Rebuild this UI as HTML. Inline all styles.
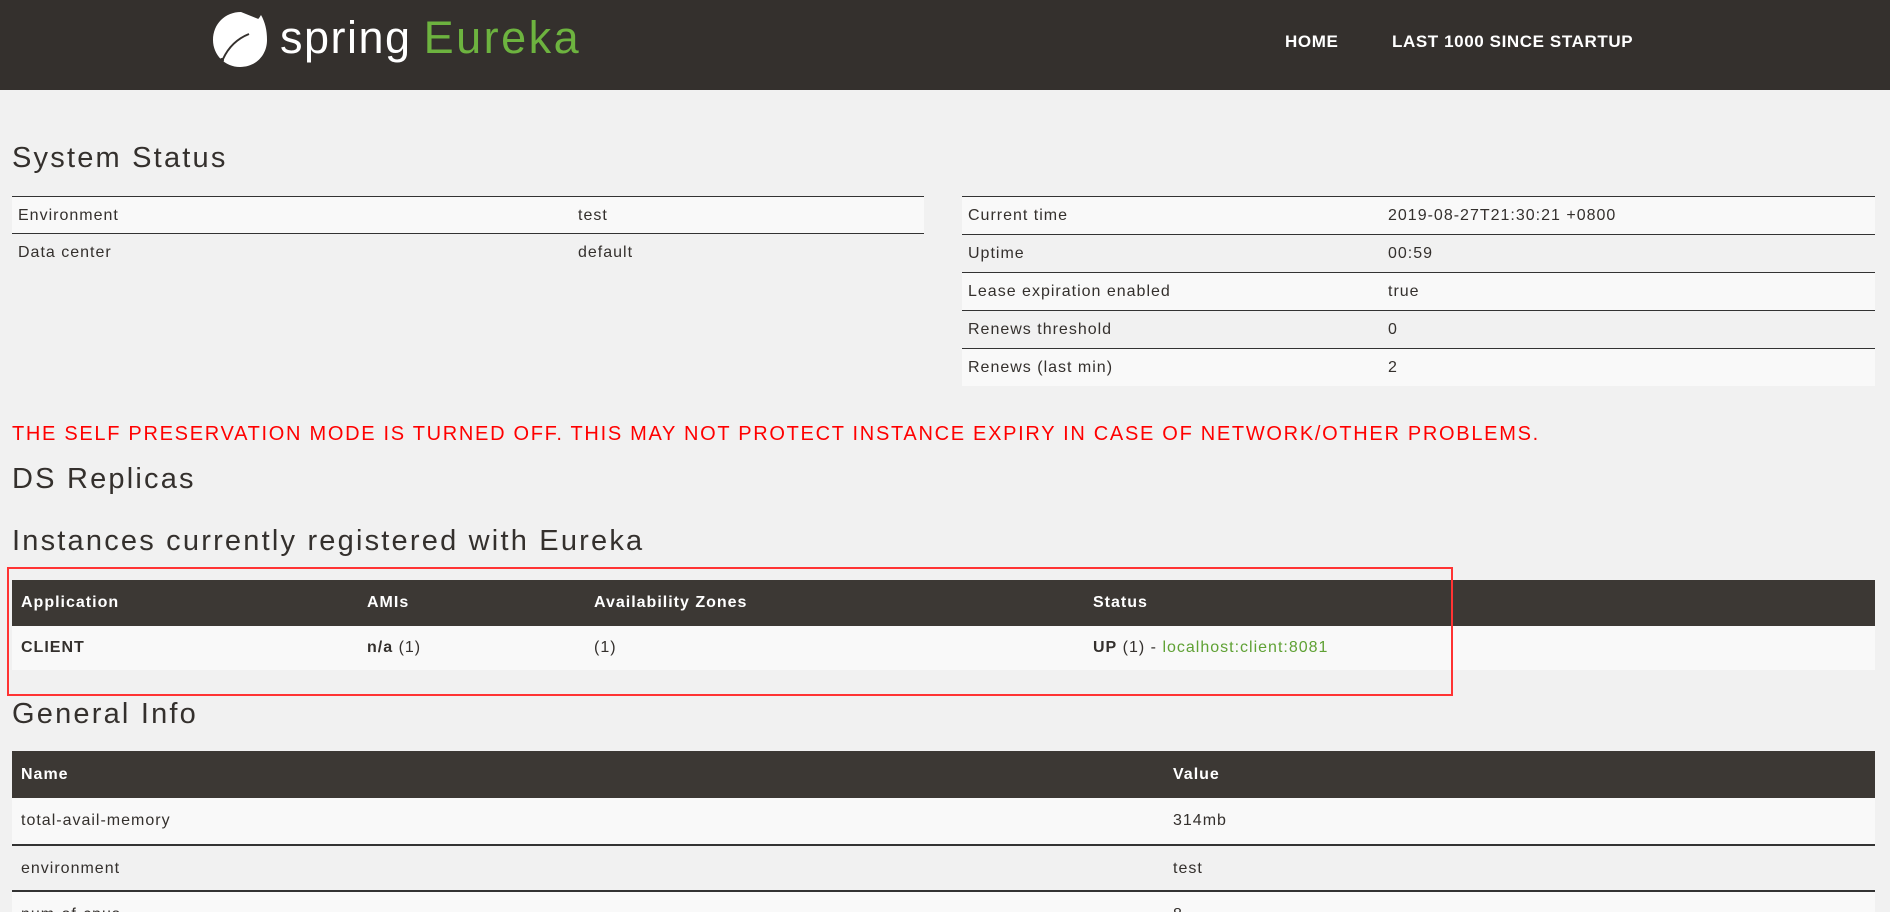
<!DOCTYPE html>
<html><head><meta charset="utf-8">
<style>
*{margin:0;padding:0;box-sizing:border-box}
html,body{width:1890px;height:912px;overflow:hidden}
body{background:#f1f1f1;font-family:"Liberation Sans",sans-serif;color:#34302d;position:relative}
.hdr{position:absolute;left:0;top:0;width:1890px;height:90px;background:#34302d}
.abs{position:absolute;white-space:nowrap}
.logo{left:280px;top:12px;font-size:45px;color:#fff;letter-spacing:1.5px}
.logo span{color:#6db33f;margin-left:12px;letter-spacing:2.5px}
.nav{top:32px;font-size:17px;color:#fff;font-weight:bold;letter-spacing:0.6px}
h2{position:absolute;font-weight:normal;font-size:29px;color:#34302d;white-space:nowrap;letter-spacing:2.2px}
.tbl{position:absolute}
.row{position:absolute;left:0;height:38px;font-size:16px;line-height:38px;letter-spacing:1px}
.row div{position:absolute;top:0;white-space:nowrap}
.hd{background:#3c3834;color:#fff;font-weight:bold}
</style></head><body>
<div class="hdr"></div>
<svg class="abs" style="left:211px;top:10px" width="60" height="60" viewBox="0 0 60 60">
<path d="M30 2 C14 2 2 14 2 30 C2 45 14 57 29 57 C45 57 56 45 56 30 C56 20 54 12 50 5 C46 12 40 16 32 18 C20 21 10 30 9 46 C14 32 24 26 38 24 C28 28 18 36 12 49 C20 52 34 50 42 42 C50 34 52 20 50 10" fill="#fff"/>
<path d="M12 49 C18 36 28 28 38 24" stroke="#34302d" stroke-width="2" fill="none"/>
<circle cx="11" cy="50" r="2" fill="#34302d"/>
</svg>
<div class="abs logo">spring<span>Eureka</span></div>
<div class="abs nav" style="left:1285px">HOME</div>
<div class="abs nav" style="left:1392px">LAST 1000 SINCE STARTUP</div>

<h2 style="left:12px;top:142px">System Status</h2>
<div class="tbl" style="left:12px;top:196px;width:912px">
<div class="row" style="top:0;width:912px;background:#f9f9f9;border-top:1px solid #333;border-bottom:1px solid #333"><div style="left:6px">Environment</div><div style="left:566px">test</div></div>
<div class="row" style="top:38px;width:912px"><div style="left:6px">Data center</div><div style="left:566px">default</div></div>
</div>
<div class="tbl" style="left:962px;top:196px;width:913px">
<div class="row" style="top:0;width:913px;background:#f9f9f9;border-top:1px solid #333"><div style="left:6px">Current time</div><div style="left:426px">2019-08-27T21:30:21 +0800</div></div>
<div class="row" style="top:38px;width:913px;border-top:1px solid #333"><div style="left:6px">Uptime</div><div style="left:426px">00:59</div></div>
<div class="row" style="top:76px;width:913px;background:#f9f9f9;border-top:1px solid #333"><div style="left:6px">Lease expiration enabled</div><div style="left:426px">true</div></div>
<div class="row" style="top:114px;width:913px;border-top:1px solid #333"><div style="left:6px">Renews threshold</div><div style="left:426px">0</div></div>
<div class="row" style="top:152px;width:913px;background:#f9f9f9;border-top:1px solid #333"><div style="left:6px">Renews (last min)</div><div style="left:426px">2</div></div>
</div>

<div class="abs" style="left:12px;top:423px;font-size:20px;color:#f00;letter-spacing:1.7px">THE SELF PRESERVATION MODE IS TURNED OFF. THIS MAY NOT PROTECT INSTANCE EXPIRY IN CASE OF NETWORK/OTHER PROBLEMS.</div>
<h2 style="left:12px;top:463px">DS Replicas</h2>
<h2 style="left:12px;top:525px">Instances currently registered with Eureka</h2>

<div class="tbl" style="left:12px;top:580px;width:1863px">
<div class="row hd" style="top:0;width:1863px;height:46px;line-height:46px"><div style="left:9px">Application</div><div style="left:355px">AMIs</div><div style="left:582px">Availability Zones</div><div style="left:1081px">Status</div></div>
<div class="row" style="top:46px;width:1863px;height:44px;line-height:44px;background:#f9f9f9"><div style="left:9px;font-weight:bold">CLIENT</div><div style="left:355px"><b>n/a</b> (1)</div><div style="left:582px">(1)</div><div style="left:1081px"><b>UP</b> (1) - <span style="color:#5fa134">localhost:client:8081</span></div></div>
</div>
<div class="abs" style="left:7px;top:567px;width:1446px;height:129px;border:2px solid #f33"></div>

<h2 style="left:12px;top:698px">General Info</h2>
<div class="tbl" style="left:12px;top:751px;width:1863px">
<div class="row hd" style="top:0;width:1863px;height:47px;line-height:47px"><div style="left:9px">Name</div><div style="left:1161px">Value</div></div>
<div class="row" style="top:47px;width:1863px;height:46px;line-height:46px;background:#f9f9f9"><div style="left:9px">total-avail-memory</div><div style="left:1161px">314mb</div></div>
<div class="row" style="top:93px;width:1863px;height:46px;line-height:46px;border-top:2px solid #333"><div style="left:9px">environment</div><div style="left:1161px">test</div></div>
<div class="row" style="top:139px;width:1863px;height:46px;line-height:46px;background:#f9f9f9;border-top:2px solid #333"><div style="left:9px">num-of-cpus</div><div style="left:1161px">8</div></div>
</div>
</body></html>
